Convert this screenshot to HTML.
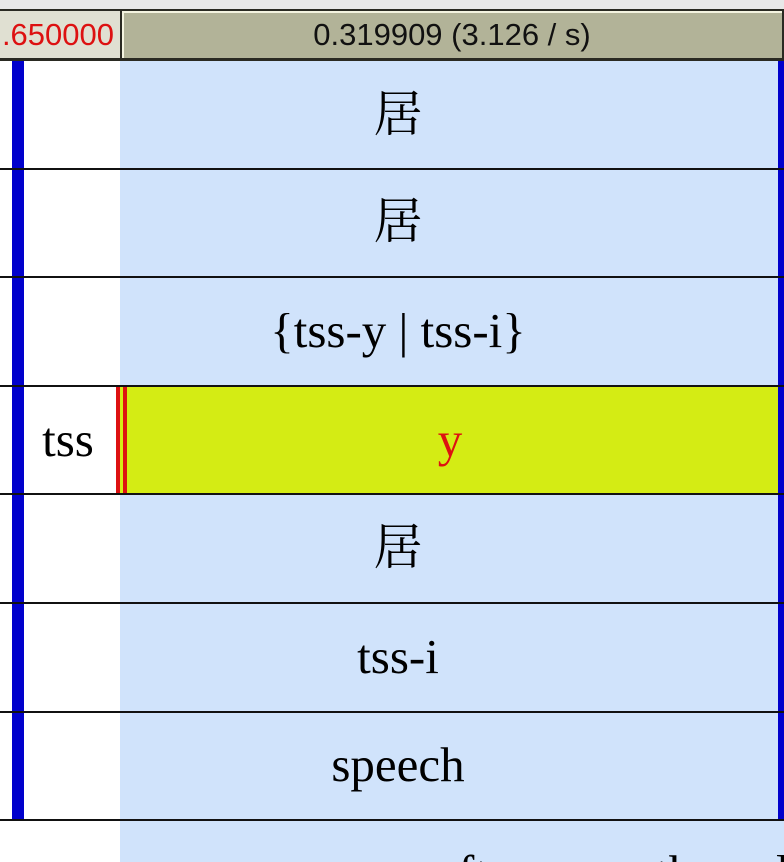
<!DOCTYPE html>
<html><head><meta charset="utf-8"><style>
html,body{margin:0;width:784px;height:862px;overflow:hidden;}
body{background:#fff;position:relative;font-family:"Liberation Serif","Noto Serif CJK SC",serif;}
div{position:absolute;box-sizing:border-box;}
.t{font-size:49px;color:#000;white-space:nowrap;line-height:50px;height:50px;}
.h{border-top:2px solid #111;left:0;width:784px;height:0;}
</style></head><body>
<div style="left:0;top:0;width:784px;height:9px;background:#e8e8e8"></div>
<div style="left:0;top:9px;width:784px;height:52px;background:#2a2a22"></div>
<div style="left:0;top:11px;width:120px;height:47px;background:#e0e0d2;color:#dd1111;font-family:'Liberation Sans',sans-serif;font-size:31px;line-height:47px;text-align:right;padding-right:6px;overflow:hidden">.650000</div>
<div style="left:122px;top:11px;width:660px;height:47px;background:#b2b398;border-top:2px solid #f4f4e0;border-left:2px solid #f4f4e0;font-family:'Liberation Sans',sans-serif;font-size:31px;line-height:44px;text-align:center;color:#111;padding-right:2px">0.319909 (3.126 / s)</div>
<div style="left:120px;top:61px;width:664px;height:801px;background:#d0e3fb"></div>
<div style="left:12px;top:61px;width:12px;height:759px;background:#0000cc"></div>
<div style="left:778px;top:61px;width:6px;height:759px;background:#0000cc"></div>
<div style="left:116px;top:387px;width:662px;height:107px;background:#d4ec14"></div>
<div style="left:116px;top:387px;width:4px;height:107px;background:#dd1111"></div>
<div style="left:123px;top:387px;width:4px;height:107px;background:#dd1111"></div>
<div style="left:0;top:387px;width:12px;height:107px;background:#fff"></div>
<div style="left:24px;top:387px;width:92px;height:107px;background:#fff"></div>
<div class="h" style="top:168px"></div>
<div class="h" style="top:276px"></div>
<div class="h" style="top:385px"></div>
<div class="h" style="top:493px"></div>
<div class="h" style="top:602px"></div>
<div class="h" style="top:711px"></div>
<div class="h" style="top:819px"></div>
<div class="t" style="left:298px;width:200px;text-align:center;top:90px">居</div>
<div class="t" style="left:298px;width:200px;text-align:center;top:197px">居</div>
<div class="t" style="left:148px;width:500px;text-align:center;top:306px">{tss-y | tss-i}</div>
<div class="t" style="left:22px;width:92px;text-align:center;top:415px">tss</div>
<div class="t" style="left:350px;width:200px;text-align:center;top:415px;color:#dd1111">y</div>
<div class="t" style="left:298px;width:200px;text-align:center;top:523px">居</div>
<div class="t" style="left:298px;width:200px;text-align:center;top:632px">tss-i</div>
<div class="t" style="left:248px;width:300px;text-align:center;top:740px">speech</div>
<div style="left:0;top:840px;width:784px;height:22px;overflow:hidden">
<div class="t" style="left:458px;top:8px">ft</div>
<div class="t" style="left:655px;top:8px">th</div>
<div class="t" style="left:776px;top:8px">l</div>
</div>
</body></html>
